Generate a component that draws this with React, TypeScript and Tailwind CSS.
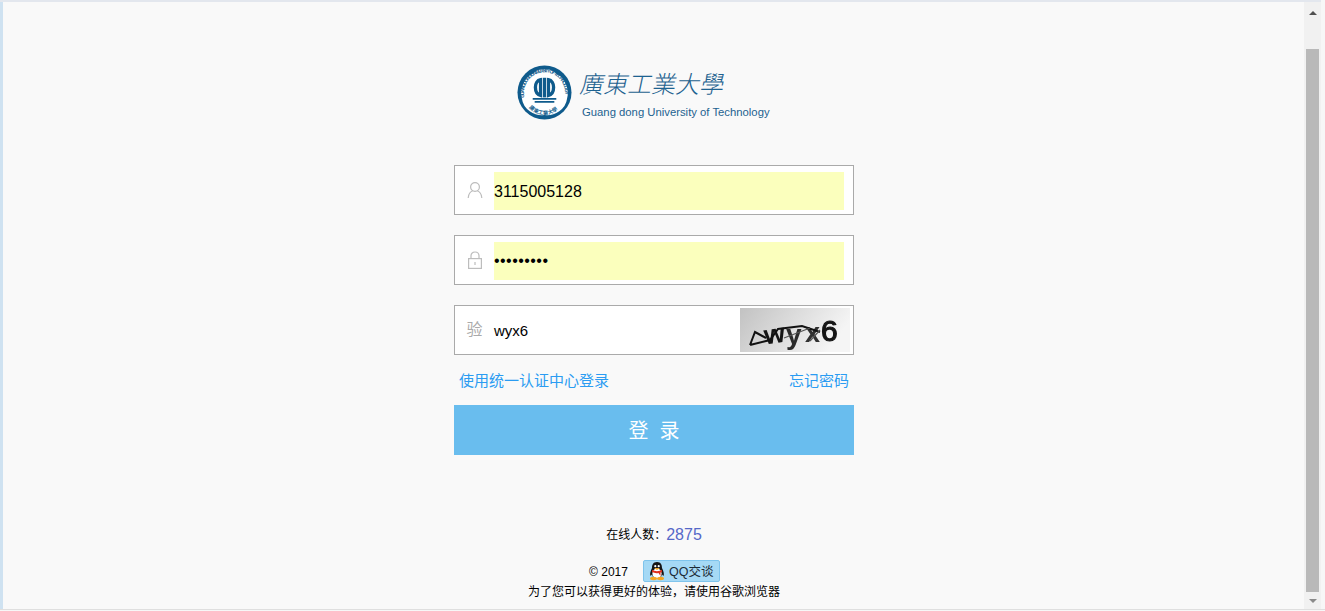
const fontStack = "font-['Liberation_Sans','Noto_Sans_CJK_SC',sans-serif]";

function Seal() {
    return (
        <svg width="55" height="55" viewBox="0 0 56 56" className="shrink-0">
            <defs>
                <path id="sealTop" d="M7.5 33 A21 21 0 1 1 48.5 33" />
                <path id="sealBottom" d="M11 42 A21 21 0 0 0 45 42" />
            </defs>
            <circle cx="28" cy="28" r="27.5" fill="#0f5b8c" />
            <path
                d="M28 4 Q36 4 40 9 Q47 12 50 20 Q53 27 51 34 Q50 42 43 47 Q36 52 28 51 Q20 52 13 47 Q6 42 5 34 Q3 27 6 20 Q9 12 16 9 Q20 4 28 4Z"
                fill="#fff"
            />
            <text fontSize="5" fill="#0f5b8c" fontFamily="Liberation Sans" fontWeight="700">
                <textPath href="#sealTop" textLength="72">GUANGDONG UNIVERSITY OF TECHNOLOGY</textPath>
            </text>
            <text fontSize="5.4" fill="#0f5b8c" fontFamily="Noto Sans CJK SC" fontWeight="700">
                <textPath href="#sealBottom" startOffset="2">廣東工業大學</textPath>
            </text>
            <path d="M24 15 C17 16 17 29 24 31 Z" fill="none" stroke="#0f5b8c" strokeWidth="3.4" />
            <path d="M32 15 C39 16 39 29 32 31 Z" fill="none" stroke="#0f5b8c" strokeWidth="3.4" />
            <path d="M28 13 V33" stroke="#0f5b8c" strokeWidth="3" />
            <path d="M16 34.5 H40 M18 37.5 H38" stroke="#0f5b8c" strokeWidth="1.8" />
        </svg>
    );
}

function UserIcon() {
    return (
        <svg width="18" height="18" viewBox="0 0 18 18" fill="none" stroke="#bdbdbd" strokeWidth="1.2">
            <circle cx="9" cy="6" r="4.4" />
            <path d="M2.2 17 C2.2 12.6 5 10.4 6.6 10 M15.8 17 C15.8 12.6 13 10.4 11.4 10" />
        </svg>
    );
}

function LockIcon() {
    return (
        <svg width="16" height="18" viewBox="0 0 16 18" fill="none" stroke="#bdbdbd" strokeWidth="1.2">
            <rect x="1.6" y="7.6" width="12.8" height="9.8" />
            <path d="M4 7.5 V5 C4 2.6 5.8 1 8 1 C10.2 1 12 2.6 12 5 V7.5" />
            <path d="M8 11 V14" />
        </svg>
    );
}

function Captcha() {
    return (
        <svg width="110" height="44" viewBox="0 0 110 44" className="shrink-0">
            <defs>
                <linearGradient id="captchaBg" x1="0" y1="0" x2="1" y2="0.3">
                    <stop offset="0" stopColor="#c2c2c2" />
                    <stop offset="1" stopColor="#f5f5f5" />
                </linearGradient>
            </defs>
            <rect width="110" height="44" fill="url(#captchaBg)" />
            <g className="blur-[0.5px]" fontFamily="Liberation Sans" fontWeight="700" fill="#151515">
                <text x="24" y="35" fontSize="27" transform="rotate(-8 36 26)">w</text>
                <text x="46" y="36" fontSize="28" fill="#2a2a2a">y</text>
                <text x="65" y="34" fontSize="27" fill="#303030">x</text>
                <text x="81" y="33" fontSize="30" fontWeight="400" stroke="#151515" strokeWidth="1.2">6</text>
                <path d="M10 37 L15 24 L26 30 M10 37 L30 32 L38 21 L62 18 L80 24" fill="none" stroke="#111" strokeWidth="2" />
                <path d="M44 30 L70 20 M70 33 L80 22" fill="none" stroke="#555" strokeWidth="1.2" />
            </g>
        </svg>
    );
}

function Penguin() {
    return (
        <svg width="18" height="20" viewBox="0 0 18 20">
            <path d="M9 1 C5 1 4 4 4 7 C2.5 10 1.5 13 2.5 15 L4 13.5 L5 16 H13 L14 13.5 L15.5 15 C16.5 13 15.5 10 14 7 C14 4 13 1 9 1Z" fill="#151515" />
            <ellipse cx="9" cy="12.5" rx="4.6" ry="5" fill="#fff" />
            <circle cx="7.3" cy="5.2" r="1.1" fill="#fff" />
            <circle cx="10.7" cy="5.2" r="1.1" fill="#fff" />
            <path d="M6 7 H12 L9 9Z" fill="#f5a623" />
            <path d="M4 9 C7 10.5 11 10.5 14 9 L14 11 L12.5 11.5 L12.5 15 L10.5 12 C8 12.5 6 12 4 11Z" fill="#e0301e" />
            <ellipse cx="5.5" cy="17.5" rx="3.5" ry="1.7" fill="#f5a623" />
            <ellipse cx="12.5" cy="17.5" rx="3.5" ry="1.7" fill="#f5a623" />
        </svg>
    );
}

function Field({ icon, children }: { icon: React.ReactNode; children: React.ReactNode }) {
    return (
        <div className="flex h-[50px] w-[400px] items-center border border-[#aaaaaa] bg-white">
            <div className="flex w-[39px] shrink-0 justify-center text-[16px] text-[#aaaaaa]">{icon}</div>
            {children}
        </div>
    );
}

export default function App() {
    return (
        <div className={`flex h-[611px] w-[1325px] flex-col overflow-hidden bg-[#f7f7f7] pb-px ${fontStack}`}>
            <div className="mr-[4px] h-[2px] shrink-0 bg-[#e3e7ee]" />
            <div className="flex min-h-0 flex-1 border-b border-[#dfdfdf]">
                <div className="flex w-[1304px] flex-col items-center border-l-[3px] border-[#cfe2f1] bg-[#f9f9f9] pl-px">
                    <div className="mt-[62px] flex h-[56px] w-[274px] items-center gap-[9px]">
                        <Seal />
                        <div className="flex flex-col">
                            <span className="h-[36px] -skew-x-12 whitespace-nowrap font-['Noto_Sans_CJK_SC',serif] text-[24px]/[34px] font-light text-[#1d6290]">
                                廣東工業大學
                            </span>
                            <span className="ml-px mt-[3px] whitespace-nowrap text-[11.3px]/[14px] text-[#1d6290]">Guang dong University of Technology</span>
                        </div>
                    </div>

                    <div className="mt-[45px] flex flex-col gap-5">
                        <Field icon={<UserIcon />}>
                            <div className="mt-[2px] flex h-[38px] w-[350px] items-center bg-[#fbffbd] pt-[2px] text-[16px] text-black">3115005128</div>
                        </Field>
                        <Field icon={<LockIcon />}>
                            <div className="mt-[2px] flex h-[38px] w-[350px] items-center bg-[#fbffbd] text-[16px] tracking-[0.45px] text-black">•••••••••</div>
                        </Field>
                        <Field icon="验">
                            <div className="mt-[3px] flex-1 text-[15px] text-black">wyx6</div>
                            <div className="mr-[3px]">
                                <Captcha />
                            </div>
                        </Field>
                    </div>

                    <div className="flex h-[50px] w-[400px] items-center justify-between px-[5px] pt-[2px] text-[15px] text-[#2b9cf2]">
                        <span>使用统一认证中心登录</span>
                        <span>忘记密码</span>
                    </div>

                    <div className="flex h-[50px] w-[400px] items-center justify-center bg-[#69bdee] pt-[2px] text-[20px] text-white">登&nbsp;&nbsp;录</div>

                    <div className="mt-[69px] flex h-[22px] items-center text-[12px] text-black">
                        在线人数：<span className="text-[16px] text-[#5568c8]">2875</span>
                    </div>

                    <div className="mt-[14px] flex h-[22px] items-center gap-[15px] pl-px text-[12px] text-black">
                        <span className="pt-[2px]">© 2017</span>
                        <div className="flex h-[22px] w-[77px] items-center gap-[3px] rounded-[2px] border border-[#7fc4ec] bg-[#a5d9f5] pl-[4px] text-[12.5px] text-[#1c2b36]">
                            <Penguin />
                            <span className="pt-[2px]">QQ交谈</span>
                        </div>
                    </div>
                    <div className="mt-px text-[12px]/[18px] text-black">为了您可以获得更好的体验，请使用谷歌浏览器</div>
                </div>

                <div className="flex w-[17px] shrink-0 flex-col items-center bg-[#f1f1f1]">
                    <div className="flex h-[17px] w-full items-center justify-center pt-[8px] pb-[4px]">
                        <div className="h-0 w-0 border-x-[4px] border-b-[4px] border-x-transparent border-b-[#505050]" />
                    </div>
                    <div className="mt-[30px] h-[543px] w-[13px] bg-[#b9b9b9]" />
                    <div className="flex h-[17px] w-full items-center justify-center">
                        <div className="h-0 w-0 border-x-[4px] border-t-[4px] border-x-transparent border-t-[#8a8a8a]" />
                    </div>
                </div>
                <div className="w-[4px] shrink-0 bg-[#f7f7f7]" />
            </div>
        </div>
    );
}
